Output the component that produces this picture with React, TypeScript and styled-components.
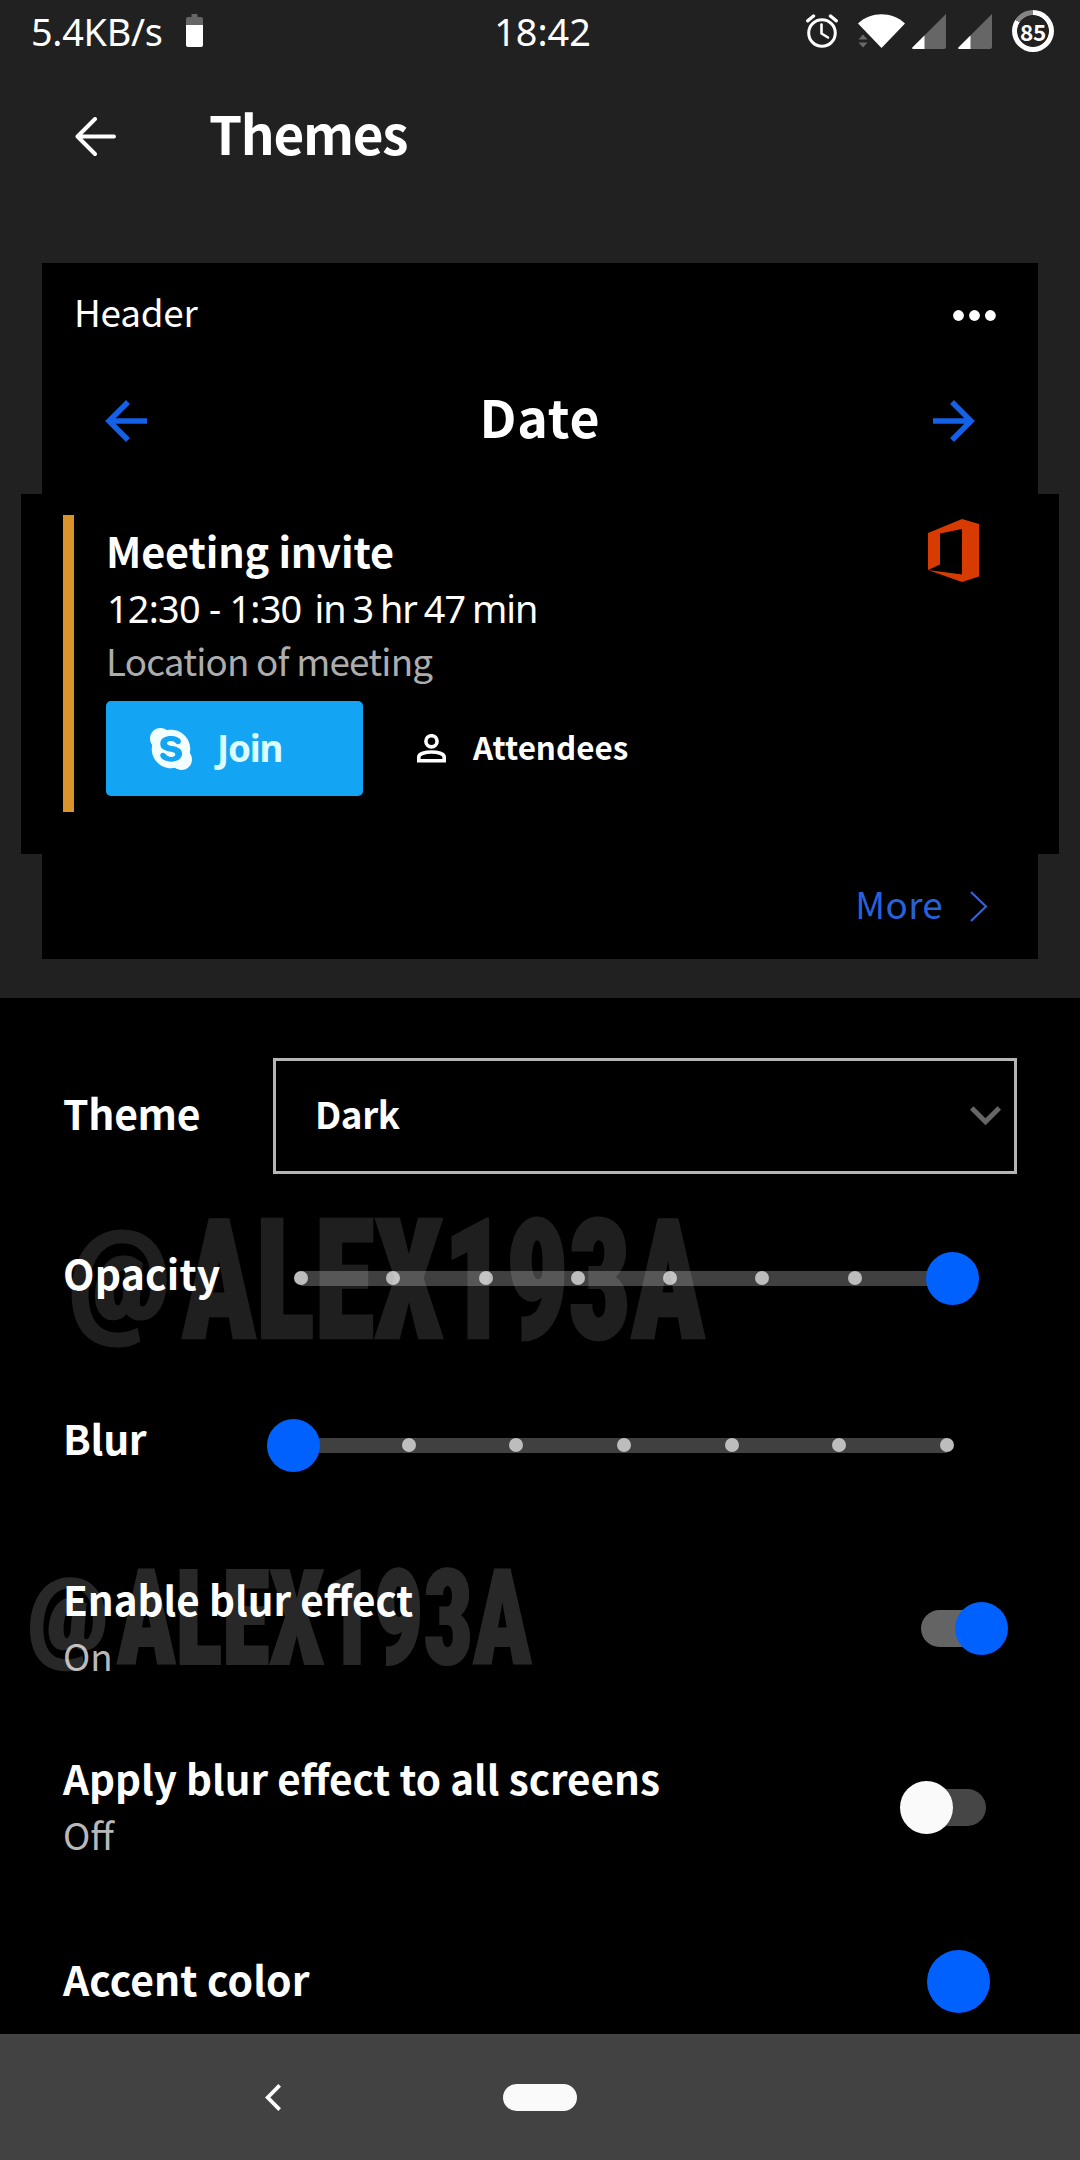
import React from "react";
import styled, { createGlobalStyle, css } from "styled-components";
import { FaSkype } from "react-icons/fa";

const ui = `"Noto Sans CJK SC", "Noto Sans", sans-serif`;
const figures = `"Noto Sans", "Open Sans", sans-serif`;
const accent = "#0061ff";

const GlobalStyle = createGlobalStyle`
  * { box-sizing: border-box; }
  body { margin: 0; background: #000; }
`;

const Screen = styled.div`
  width: 1080px;
  height: 2160px;
  display: flex;
  flex-direction: column;
  overflow: hidden;
  background: #000;
  color: #fff;
  font-family: ${ui};
`;

const Text = styled.span<{
  $size: number;
  $bold?: boolean;
  $spacing?: number;
  $words?: number;
  $line?: number;
  $color?: string;
  $figures?: boolean;
}>`
  display: block;
  white-space: pre;
  font-family: ${(p) => (p.$figures ? figures : ui)};
  font-size: ${(p) => p.$size}px;
  font-weight: ${(p) => (p.$bold ? 700 : 400)};
  letter-spacing: ${(p) => p.$spacing ?? 0}px;
  word-spacing: ${(p) => p.$words ?? 0}px;
  line-height: ${(p) => (p.$line ? `${p.$line}px` : "1")};
  color: ${(p) => p.$color ?? "#fff"};
`;

/* ---------- top area ---------- */

const TopArea = styled.header`
  height: 998px;
  flex: none;
  display: flex;
  flex-direction: column;
  background: #212121;
`;

const StatusBar = styled.div`
  height: 62px;
  padding: 0 26px 0 31px;
  display: grid;
  grid-template-columns: 1fr auto 1fr;
  align-items: center;
`;

const StatusLeft = styled.div`
  display: flex;
  align-items: center;
  gap: 23px;
`;

const StatusRight = styled.div`
  display: flex;
  align-items: center;
  justify-content: flex-end;
`;

const StatusText = styled.div`
  padding-top: 2px;
`;

const StatusIcon = styled.svg<{ $gap?: number }>`
  display: block;
  margin-right: ${(p) => p.$gap ?? 0}px;
`;

const Ring = styled.div`
  width: 42px;
  height: 42px;
  display: grid;
  place-items: center;
  border-radius: 50%;
  background:
    radial-gradient(circle, #212121 0 15.5px, transparent 16.3px),
    conic-gradient(#fff 0 84%, #858585 84% 100%);
`;

const Toolbar = styled.div`
  height: 138px;
  padding-left: 75px;
  display: flex;
  align-items: center;
  gap: 93px;

  span {
    padding-top: 2px;
  }
`;

const BackArrow = styled.svg`
  display: block;
  margin-top: 10px;
`;

const Preview = styled.section`
  margin-top: 63px;
  display: flex;
  flex-direction: column;
  align-items: center;
`;

const CardTop = styled.div`
  width: 996px;
  height: 231px;
  background: #000;
`;

const CardHeader = styled.div`
  height: 96px;
  padding: 0 42px 0 32px;
  display: flex;
  align-items: center;
  justify-content: space-between;
`;

const Dots = styled.svg`
  display: block;
  margin-top: 9px;
`;

const DateRow = styled.div`
  height: 113px;
  padding: 0 63px;
  display: flex;
  align-items: center;
  justify-content: space-between;
`;

const DateArrow = styled.svg<{ $flip?: boolean }>`
  display: block;
  margin-top: 11px;
  ${(p) => p.$flip && css`transform: scaleX(-1);`}
`;

const Event = styled.article`
  width: 1038px;
  height: 360px;
  padding: 21px 80px 0 42px;
  display: flex;
  align-items: flex-start;
  background: #000;
`;

const EventBar = styled.div`
  width: 11px;
  height: 297px;
  background: #d9952a;
`;

const EventBody = styled.div`
  flex: 1;
  padding: 10px 0 0 32px;
`;

const TimeLine = styled.div`
  padding-left: 1px;
  display: flex;
  gap: 13px;
`;

const Actions = styled.div`
  margin-top: 22px;
  display: flex;
  align-items: center;
`;

const JoinButton = styled.button`
  width: 257px;
  height: 95px;
  padding: 0 0 0 41px;
  border: 0;
  border-radius: 5px;
  display: flex;
  align-items: center;
  gap: 22px;
  background: #14a4f4;
  color: #f3feff;

  svg {
    display: block;
  }
`;

const Attendees = styled.div`
  margin-left: 54px;
  display: flex;
  align-items: center;
  gap: 27px;

  span {
    padding-bottom: 3px;
  }
`;

const OfficeLogo = styled.svg`
  display: block;
  margin-top: 3.5px;
`;

const CardFooter = styled.div`
  width: 996px;
  height: 105px;
  padding: 0 50px 7px 0;
  display: flex;
  align-items: center;
  justify-content: flex-end;
  gap: 27px;
  background: #000;
`;

const MoreChevron = styled.svg`
  display: block;
  margin-top: 7px;
`;

/* ---------- settings ---------- */

const Settings = styled.main`
  position: relative;
  height: 1036px;
  flex: none;
  padding: 60px 63px 0 63px;
  display: flex;
  flex-direction: column;
`;

const ThemeRow = styled.div`
  height: 116px;
  display: grid;
  grid-template-columns: 210px 1fr;
  align-items: center;
`;

const RowLabel = styled.div<{ $lift: number }>`
  padding-bottom: ${(p) => p.$lift}px;
`;

const Select = styled.div`
  height: 116px;
  padding: 0 13px 0 39px;
  border: 3px solid #b5b5b5;
  display: flex;
  align-items: center;
  justify-content: space-between;

  span {
    padding-bottom: 6px;
  }
`;

const SliderRow = styled.div<{ $top: number }>`
  height: 100px;
  margin-top: ${(p) => p.$top}px;
  display: grid;
  grid-template-columns: 238px 646px;
  align-items: center;
`;

const Track = styled.div`
  position: relative;
  height: 15px;
  display: flex;
  background: #404040;
`;

const Stops = styled.div`
  flex: 1;
  margin: 0 -7px;
  display: flex;
  align-items: center;
  justify-content: space-between;
`;

const Stop = styled.i`
  width: 14px;
  height: 14px;
  border-radius: 50%;
  background: #bdbdbd;
`;

const Thumb = styled.div<{ $end?: boolean }>`
  position: absolute;
  top: -19px;
  ${(p) => (p.$end ? "right: -32px;" : "left: -34px;")}
  width: 53px;
  height: 53px;
  border-radius: 50%;
  background: ${accent};
`;

const ToggleRow = styled.div<{ $top: number }>`
  height: 114px;
  margin-top: ${(p) => p.$top}px;
  padding-right: 31px;
  display: flex;
  align-items: center;
  justify-content: space-between;
`;

const ToggleText = styled.div`
  margin-top: 2px;
`;

const Toggle = styled.div<{ $on?: boolean }>`
  width: 65px;
  height: 37px;
  margin-top: 4px;
  border-radius: 19px;
  display: flex;
  align-items: center;
  justify-content: ${(p) => (p.$on ? "flex-end" : "flex-start")};
  background: ${(p) => (p.$on ? "#646464" : "#464646")};

  &::after {
    content: "";
    flex: none;
    width: 53px;
    height: 53px;
    margin: 0 -21.5px;
    border-radius: 50%;
    background: ${(p) => (p.$on ? accent : "#fafafa")};
  }
`;

const AccentRow = styled.div`
  height: 64px;
  margin-top: 87px;
  padding-right: 27px;
  display: flex;
  align-items: center;
  justify-content: space-between;
`;

const Swatch = styled.div`
  width: 63px;
  height: 63px;
  border-radius: 50%;
  background: ${accent};
`;

const Watermark = styled.div<{ $x: number; $y: number; $size: number; $alpha: number }>`
  position: absolute;
  left: ${(p) => p.$x}px;
  top: ${(p) => p.$y}px;
  display: flex;
  align-items: baseline;
  pointer-events: none;
  font-family: "Roboto Condensed", Roboto, sans-serif;
  font-size: ${(p) => p.$size}px;
  font-weight: 900;
  line-height: 1;
  white-space: nowrap;
  color: #fff;
  opacity: ${(p) => p.$alpha};
`;

const WatermarkAt = styled.span`
  width: 0.89em;
  font-size: 0.76em;
  -webkit-text-stroke: 0.025em #fff;
  transform: translateY(-0.155em) scaleX(1.04);
  transform-origin: left;
`;

const WatermarkName = styled.span`
  -webkit-text-stroke: 0.016em #fff;
  transform: scaleX(0.735);
  transform-origin: left;
`;

/* ---------- navigation ---------- */

const NavBar = styled.nav`
  height: 126px;
  flex: none;
  padding-left: 265px;
  display: flex;
  align-items: center;
  gap: 222px;
  background: #424242;
`;

const HomePill = styled.div`
  width: 74px;
  height: 27px;
  border-radius: 14px;
  background: #fafafa;
`;

const Slider = ({
  label,
  stops,
  atEnd,
  top,
  lift,
  spacing,
}: {
  label: string;
  stops: number;
  atEnd?: boolean;
  top: number;
  lift: number;
  spacing: number;
}) => (
  <SliderRow $top={top}>
    <RowLabel $lift={lift}>
      <Text $size={40.9} $bold $spacing={spacing}>{label}</Text>
    </RowLabel>
    <Track>
      <Stops>
        {Array.from({ length: stops }, (_, i) => (
          <Stop key={i} />
        ))}
      </Stops>
      <Thumb $end={atEnd} />
    </Track>
  </SliderRow>
);

const ToggleSetting = ({ title, on, top }: { title: string; on?: boolean; top: number }) => (
  <ToggleRow $top={top}>
    <ToggleText>
      <Text $size={40.4} $bold $line={57}>{title}</Text>
      <Text $size={36.8} $line={57} $color="#b8b8b8">{on ? "On" : "Off"}</Text>
    </ToggleText>
    <Toggle $on={on} />
  </ToggleRow>
);

const Signal = ({ gap }: { gap: number }) => (
  <StatusIcon $gap={gap} width="34" height="35" viewBox="0 0 34 35">
    <path d="M34 0V33a2 2 0 0 1-2 2H1.500a1 1 0 0 1-.8-1.800Z" fill="#666" />
    <path d="M12.500 21.600V35H1.500a1 1 0 0 1-.8-1.800Z" fill="#fff" />
  </StatusIcon>
);

export default function App() {
  return (
    <>
      <GlobalStyle />
      <Screen>
        <TopArea>
          <StatusBar>
            <StatusLeft>
              <StatusText>
                <Text $size={37.8} $figures $spacing={-0.28}>5.4KB/s</Text>
              </StatusText>
              <StatusIcon width="17" height="33" viewBox="0 0 17 33">
                <path d="M5.500 0h6v3H15a2 2 0 0 1 2 2v7H0V5a2 2 0 0 1 2-2h3.500Z" fill="#666" />
                <path d="M0 11h17v20a2 2 0 0 1-2 2H2a2 2 0 0 1-2-2Z" fill="#fff" />
              </StatusIcon>
            </StatusLeft>
            <StatusText>
              <Text $size={37.8} $figures>18:42</Text>
            </StatusText>
            <StatusRight>
              <StatusIcon $gap={20} width="32" height="34" viewBox="0 0 32 34" fill="none" stroke="#fff">
                <circle cx="16" cy="19" r="13.300" strokeWidth="3" />
                <path d="M15.500 10.500V19.500l6.500 4" strokeWidth="2.600" strokeLinejoin="round" strokeLinecap="round" />
                <path d="M1.800 6.800 7.500 2M30.200 6.800 24.500 2" strokeWidth="3.400" strokeLinecap="round" />
              </StatusIcon>
              <StatusIcon $gap={7} width="47" height="34" viewBox="0 0 47 34">
                <path d="M.5 25.500 5 20.500l4.500 5ZM.5 28.500l4.500 5 4.500-5Z" fill="#6a6a6a" />
                <path d="M0 9.600C7 3 15 .3 23.500.3S40 3 47 9.600L23.500 34Z" fill="#fff" />
              </StatusIcon>
              <Signal gap={12} />
              <Signal gap={20} />
              <Ring>
                <Text $size={22.5} $spacing={-0.3} $bold>85</Text>
              </Ring>
            </StatusRight>
          </StatusBar>

          <Toolbar>
            <BackArrow width="41" height="39" viewBox="0 0 41 39" fill="none" stroke="#fff" strokeWidth="3.900" strokeLinecap="round" strokeLinejoin="round">
              <path d="M39 19.500H2.500M20 2 2.500 19.500 20 37" />
            </BackArrow>
            <Text $size={53} $bold $spacing={-1.3}>Themes</Text>
          </Toolbar>

          <Preview>
            <CardTop>
              <CardHeader>
                <Text $size={36.8} $spacing={-0.2}>Header</Text>
                <Dots width="43" height="11" viewBox="0 0 43 11" fill="#fff">
                  <circle cx="5.500" cy="5.500" r="5.400" />
                  <circle cx="21.500" cy="5.500" r="5.400" />
                  <circle cx="37.400" cy="5.500" r="5.400" />
                </Dots>
              </CardHeader>
              <DateRow>
                <DateArrow width="42" height="42" viewBox="0 0 42 42" fill="none" stroke="#1460e6" strokeWidth="5.500">
                  <path d="M42 21H4M23 2 4 21 23 40" />
                </DateArrow>
                <Text $size={51.8} $bold $spacing={0.9}>Date</Text>
                <DateArrow $flip width="42" height="42" viewBox="0 0 42 42" fill="none" stroke="#1460e6" strokeWidth="5.500">
                  <path d="M42 21H4M23 2 4 21 23 40" />
                </DateArrow>
              </DateRow>
            </CardTop>

            <Event>
              <EventBar />
              <EventBody>
                <Text $size={41.4} $bold $line={50} $spacing={-0.14}>Meeting invite</Text>
                <TimeLine>
                  <Text $size={37.8} $figures $line={67} $spacing={-0.75}>12:30 - 1:30</Text>
                  <Text $size={37.8} $figures $line={67} $spacing={-1.05} $words={-1.8}>in 3 hr 47 min</Text>
                </TimeLine>
                <Text $size={36.8} $line={37} $spacing={-0.8} $color="#adadad">Location of meeting</Text>
                <Actions>
                  <JoinButton>
                    <FaSkype size={48} />
                    <Text $size={36.8} $figures $bold $spacing={-1.2} $color="#dcfcff">Join</Text>
                  </JoinButton>
                  <Attendees>
                    <svg width="29" height="29" viewBox="0 0 29 29" fill="none" stroke="#fff" strokeWidth="3.600">
                      <circle cx="14.500" cy="7.300" r="5.600" />
                      <path d="M1.800 26.800V23c0-3.200 6.500-5 12.700-5s12.700 1.800 12.700 5v3.800Z" />
                    </svg>
                    <Text $size={31.4} $bold>Attendees</Text>
                  </Attendees>
                </Actions>
              </EventBody>
              <OfficeLogo width="51" height="63" viewBox="0 0 51 63">
                <path d="M0 14 34 0l17 5v52.500L34 63 0 51l34 4.500V10L12 14.500v31L0 51Z" fill="#d83b01" />
              </OfficeLogo>
            </Event>

            <CardFooter>
              <Text $size={36.8} $spacing={0.3} $color="#2662dc">More</Text>
              <MoreChevron width="18" height="31" viewBox="0 0 18 31" fill="none" stroke="#3564cf" strokeWidth="2.200">
                <path d="M1 1 16 15.500 1 30" />
              </MoreChevron>
            </CardFooter>
          </Preview>
        </TopArea>

        <Settings>
          <ThemeRow>
            <RowLabel $lift={6}>
              <Text $size={40.9} $bold $spacing={-0.3}>Theme</Text>
            </RowLabel>
            <Select>
              <Text $size={36.8} $bold $spacing={-0.4}>Dark</Text>
              <svg width="31" height="20" viewBox="0 0 31 20" fill="none" stroke="#666" strokeWidth="5">
                <path d="M1.700 2 15.500 15.800 29.300 2" />
              </svg>
            </Select>
          </ThemeRow>

          <Slider label="Opacity" stops={8} atEnd top={54} lift={10} spacing={0.2} />
          <Slider label="Blur" stops={7} top={67} lift={13} spacing={-0.3} />
          <ToggleSetting title="Enable blur effect" on top={74} />
          <ToggleSetting title="Apply blur effect to all screens" top={65} />

          <AccentRow>
            <RowLabel $lift={4}>
              <Text $size={40.9} $bold $spacing={0.1}>Accent color</Text>
            </RowLabel>
            <Swatch />
          </AccentRow>

          <Watermark $x={69} $y={201} $size={166.5} $alpha={0.12}>
            <WatermarkAt>@</WatermarkAt>
            <WatermarkName>ALEX193A</WatermarkName>
          </Watermark>
          <Watermark $x={28} $y={555} $size={132} $alpha={0.155}>
            <WatermarkAt>@</WatermarkAt>
            <WatermarkName>ALEX193A</WatermarkName>
          </Watermark>
        </Settings>

        <NavBar>
          <svg width="16" height="27" viewBox="0 0 16 27" fill="none" stroke="#fff" strokeWidth="3.800">
            <path d="M14.700 1.400 2.700 13.500 14.700 25.600" />
          </svg>
          <HomePill />
        </NavBar>
      </Screen>
    </>
  );
}
